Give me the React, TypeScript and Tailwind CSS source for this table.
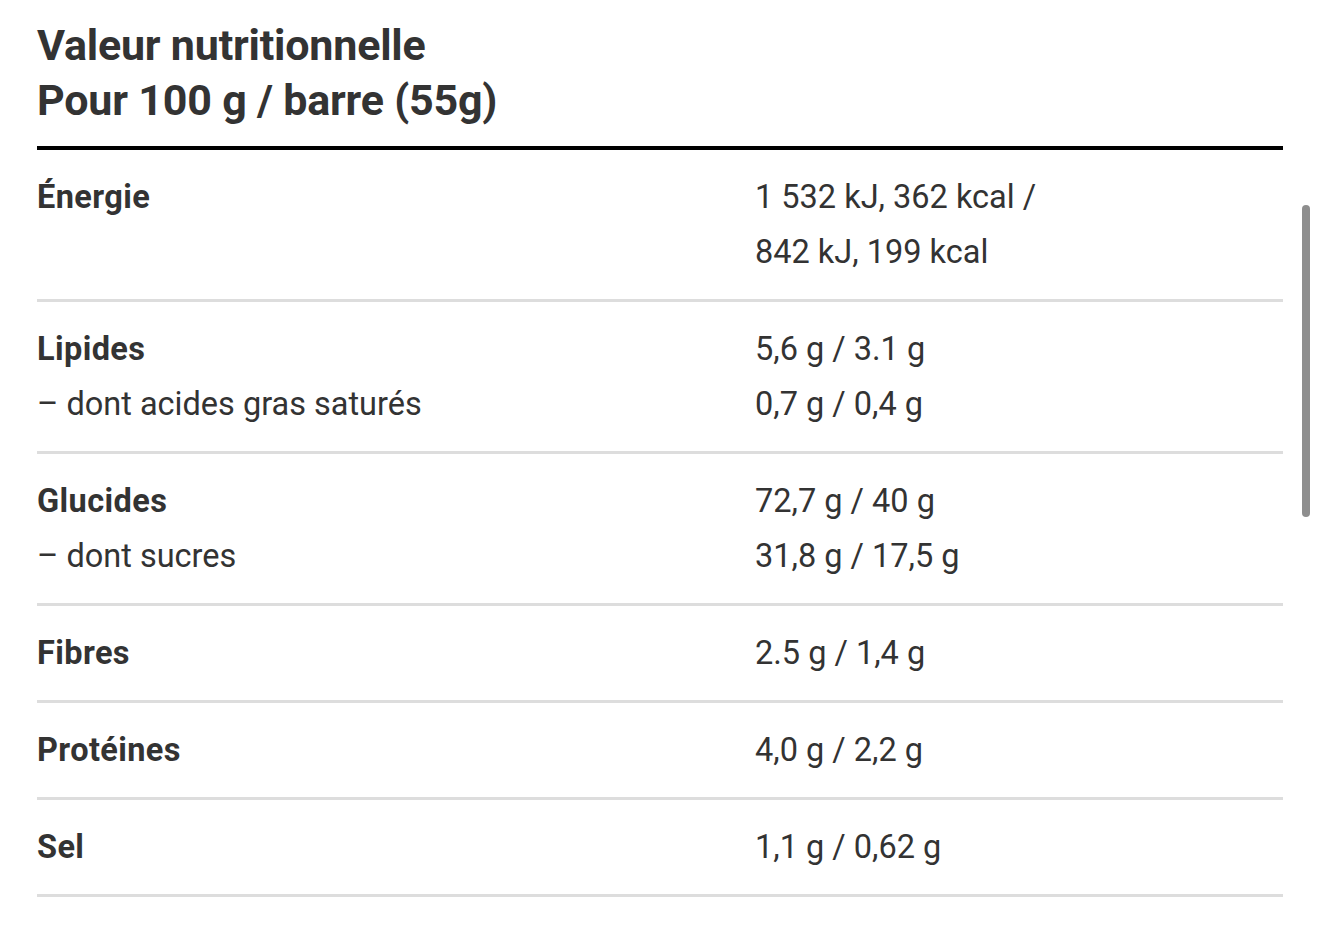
const rows: { label: string; value: string; sub?: { label: string; value: string } ; extra?: string }[] = [
  { label: "Énergie", value: "1 532 kJ, 362 kcal /", extra: "842 kJ, 199 kcal" },
  { label: "Lipides", value: "5,6 g / 3.1 g", sub: { label: "– dont acides gras saturés", value: "0,7 g / 0,4 g" } },
  { label: "Glucides", value: "72,7 g / 40 g", sub: { label: "– dont sucres", value: "31,8 g / 17,5 g" } },
  { label: "Fibres", value: "2.5 g / 1,4 g" },
  { label: "Protéines", value: "4,0 g / 2,2 g" },
  { label: "Sel", value: "1,1 g / 0,62 g" },
]

export default function App() {
  return (
    <div className="relative min-h-screen bg-white px-[37px] font-['Roboto','Liberation_Sans',sans-serif] text-[#333]">
      <div className="py-[18px] text-[43px] font-bold leading-[55px] tracking-[-0.2px]">
        <div>Valeur nutritionnelle</div>
        <div>Pour 100 g / barre (55g)</div>
      </div>

      <div className="border-t-4 border-black">
        {rows.map((row) => (
          <div
            key={row.label}
            className="grid grid-cols-[718px_1fr] border-b-[3px] border-[#dddddd] py-[19.5px] text-[32.5px] leading-[55px]"
          >
            <div>
              <div className="font-bold tracking-[0.4px]">{row.label}</div>
              {row.sub && <div>{row.sub.label}</div>}
            </div>
            <div>
              <div>{row.value}</div>
              {row.extra && <div>{row.extra}</div>}
              {row.sub && <div>{row.sub.value}</div>}
            </div>
          </div>
        ))}
      </div>

      {/* overlay scrollbar thumb */}
      <div className="absolute right-[10px] top-[205px] h-[312px] w-[8px] rounded-full bg-[#8e8e8e]" />
    </div>
  )
}
